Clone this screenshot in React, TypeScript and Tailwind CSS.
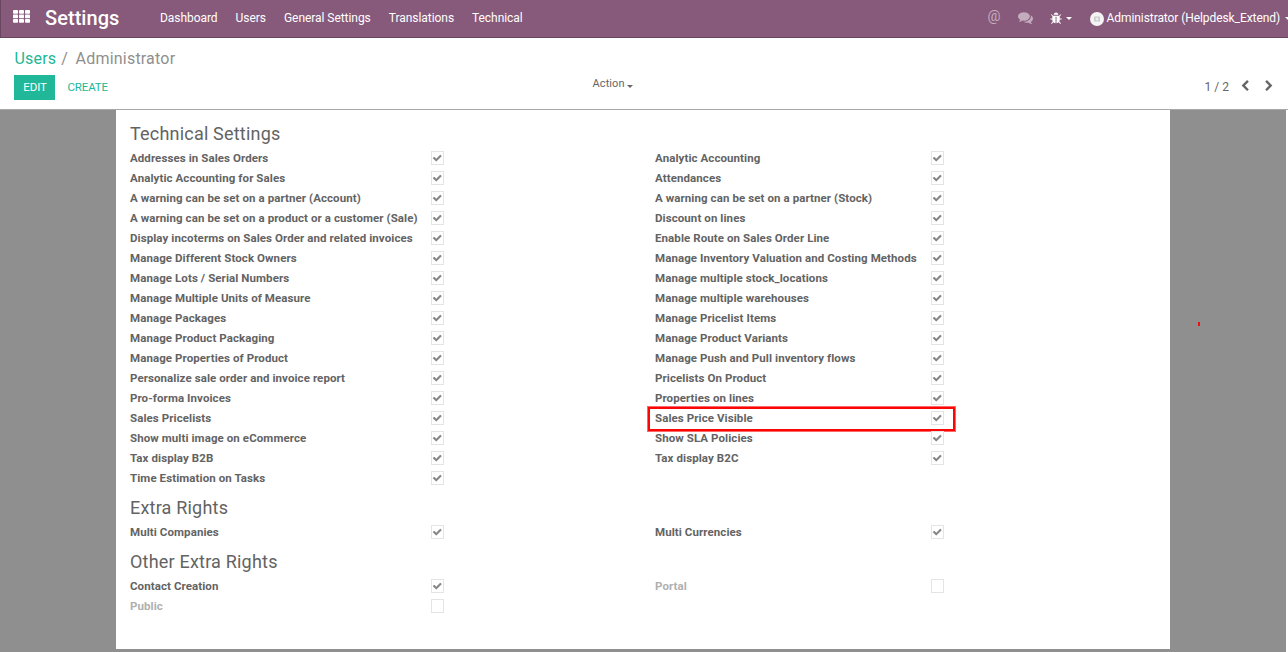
import React from "react";

type Item = [label: string, checked: boolean, highlighted?: boolean];

const on = (label: string): Item => [label, true];

const technicalLeft: Item[] = [
  "Addresses in Sales Orders",
  "Analytic Accounting for Sales",
  "A warning can be set on a partner (Account)",
  "A warning can be set on a product or a customer (Sale)",
  "Display incoterms on Sales Order and related invoices",
  "Manage Different Stock Owners",
  "Manage Lots / Serial Numbers",
  "Manage Multiple Units of Measure",
  "Manage Packages",
  "Manage Product Packaging",
  "Manage Properties of Product",
  "Personalize sale order and invoice report",
  "Pro-forma Invoices",
  "Sales Pricelists",
  "Show multi image on eCommerce",
  "Tax display B2B",
  "Time Estimation on Tasks",
].map(on);

const technicalRight: Item[] = [
  ...[
    "Analytic Accounting",
    "Attendances",
    "A warning can be set on a partner (Stock)",
    "Discount on lines",
    "Enable Route on Sales Order Line",
    "Manage Inventory Valuation and Costing Methods",
    "Manage multiple stock_locations",
    "Manage multiple warehouses",
    "Manage Pricelist Items",
    "Manage Product Variants",
    "Manage Push and Pull inventory flows",
    "Pricelists On Product",
    "Properties on lines",
  ].map(on),
  ["Sales Price Visible", true, true],
  on("Show SLA Policies"),
  on("Tax display B2C"),
];

const paths = {
  check:
    "M1671 566q0 40-28 68l-724 724-136 136q-28 28-68 28t-68-28l-136-136-362-362q-28-28-28-68t28-68l136-136q28-28 68-28t68 28l294 295 656-657q28-28 68-28t68 28l136 136q28 28 28 68z",
  left: "M1427 301l-531 531 531 531q19 19 19 45t-19 45l-166 166q-19 19-45 19t-45-19l-742-742q-19-19-19-45t19-45l742-742q19-19 45-19t45 19l166 166q19 19 19 45t-19 45z",
  right:
    "M1363 877l-742 742q-19 19-45 19t-45-19l-166-166q-19-19-19-45t19-45l531-531-531-531q-19-19-19-45t19-45l166-166q19-19 45-19t45 19l742 742q19 19 19 45t-19 45z",
  bug: "M1632 960q0 26-19 45t-45 19h-224q0 171-67 290l208 209q19 19 19 45t-19 45q-18 19-45 19t-45-19l-198-197q-5 5-15 13t-42 28.5-65 36.5-82 29-97 13v-896h-128v896q-51 0-101.5-13.5t-87-33-66-39-43.5-32.5l-15-14-183 207q-20 21-48 21-24 0-43-16-19-18-20.500-44.500t15.500-46.500l202-227q-58-114-58-274h-224q-26 0-45-19t-19-45 19-45 45-19h224v-294l-173-173q-19-19-19-45t19-45 45-19 45 19l173 173h844l173-173q19-19 45-19t45 19 19 45-19 45l-173 173v294h224q26 0 45 19t19 45zm-480-576h-640q0-133 93.500-226.500t226.500-93.500 226.500 93.500 93.500 226.500z",
  comments:
    "M1408 768q0 139-94 257t-256.500 186.500-353.500 68.500q-86 0-176-16-124 88-278 128-36 9-86 16h-3q-11 0-20.500-8t-11.500-21q-1-3-1-6.500t.5-6.500 2-6l2.500-5 3.500-5.500 4-5 4.500-5 4-4.500q5-6 23-25t26-29.500 22.500-29 25-38.500 20.500-44q-124-72-195-177t-71-224q0-139 94-257t256.500-186.500 353.500-68.500 353.500 68.500 256.500 186.500 94 257zm384 256q0 120-71 224.500t-195 176.500q10 24 20.500 44t25 38.500 22.500 29 26 29.500 23 25q1 1 4 4.500t4.500 5 4 5 3.500 5.500l2.500 5 2 6 .5 6.500-1 6.500q-3 14-13 22t-22 7q-50-7-86-16-154-40-278-128-90 16-176 16-271 0-472-132 58 4 88 4 161 0 309-45t264-129q125-92 192-212t67-254q0-77-23-152 129 71 204 178t75 230z",
};

function Icon({ name, className }: { name: keyof typeof paths; className: string }) {
  return (
    <svg viewBox="0 0 1792 1792" fill="currentColor" className={`shrink-0 ${className}`}>
      <path d={paths[name]} />
    </svg>
  );
}

function Caret({ className = "" }: { className?: string }) {
  return (
    <svg viewBox="0 0 6 3" fill="currentColor" className={`h-[3px] w-[6px] shrink-0 ${className}`}>
      <path d="M0 0h6L3 3z" />
    </svg>
  );
}

function AppsIcon() {
  return (
    <svg viewBox="0 0 17 13" fill="currentColor" className="mb-[3px] h-[13px] w-[17px] shrink-0">
      {[0, 4.5, 9].map((y) =>
        [0, 6, 12].map((x) => <rect key={`${x}-${y}`} x={x} y={y} width="5" height="3.8" rx="0.8" />)
      )}
    </svg>
  );
}

function Column({ items, labelWidth }: { items: Item[]; labelWidth: string }) {
  return (
    <div>
      {items.map(([label, checked, highlighted]) => (
        <div key={label} className="relative flex h-5 items-center">
          <span
            className={`shrink-0 whitespace-nowrap text-[11.5px] font-bold leading-[18px] tracking-[0.085px] ${labelWidth} ${checked ? "text-[#636363]" : "text-[#b0b0b0]"}`}
          >
            {label}
          </span>
          <span className="flex h-[14px] w-[13px] items-center justify-center border border-[#e4e4e4] text-[#868686]">
            {checked && <Icon name="check" className="mb-px h-[10px] w-[10.5px]" />}
          </span>
          {highlighted && (
            <span className="absolute -left-[7px] -top-[1px] h-[24px] w-[307px] border-2 border-[#fb0505] outline outline-[#f66]" />
          )}
        </div>
      ))}
    </div>
  );
}

function Section({ title, left, right }: { title: string; left: Item[]; right: Item[] }) {
  return (
    <section className="mb-[7px]">
      <h2 className="flex h-[27px] items-center whitespace-nowrap pb-[2px] text-[18px] tracking-[0.2px] text-[#636363]">
        {title}
      </h2>
      <div className="grid grid-cols-[525px_1fr]">
        <Column items={left} labelWidth="w-[301px]" />
        <Column items={right} labelWidth="w-[276px]" />
      </div>
    </section>
  );
}

export default function App() {
  return (
    <div className="flex h-[652px] w-[1288px] flex-col overflow-hidden bg-white font-['Roboto',sans-serif] text-[12px] text-[#666]">
      <header className="flex h-[38px] shrink-0 items-center border-b border-l border-b-[#68465f] border-l-[#68465f] bg-[#875a7b] pb-px pl-[11.5px] text-white">
        <AppsIcon />
        <h1 className="ml-[15.5px] w-[115px] text-[20px] font-medium tracking-[0.05px]">Settings</h1>
        <nav className="flex gap-[18px] whitespace-nowrap tracking-[-0.05px]">
          <a>Dashboard</a>
          <a>Users</a>
          <a>General Settings</a>
          <a>Translations</a>
          <a>Technical</a>
        </nav>
        <div className="ml-auto flex items-center whitespace-nowrap">
          <span className="mb-[2px] w-[30px] text-[14.5px] leading-none text-[#c3acbd]">@</span>
          <Icon name="comments" className="mb-[2px] h-[15px] w-[15px] text-[#c3acbd]" />
          <Icon name="bug" className="ml-[17px] h-[13px] w-[13px]" />
          <Caret className="ml-[3px]" />
          <svg viewBox="0 0 14 14" className="ml-[18px] mt-[2px] h-[14px] w-[14px]">
            <circle cx="7" cy="7" r="7" fill="#f4f4f4" />
            <rect x="4" y="4.500" width="6" height="5" rx="0.5" fill="#ccc" />
            <circle cx="7" cy="7" r="1.500" fill="#eee" />
          </svg>
          <span className="ml-[3px] tracking-[-0.08px]">Administrator (Helpdesk_Extend)</span>
          <Caret className="-mr-[3px] ml-[5px]" />
        </div>
      </header>
      <div className="h-[72px] shrink-0 border-b border-[#a8a8a8] pl-[14px] pr-[13px] pt-[11px]">
        <div className="flex h-[20px] items-center whitespace-pre text-[16px] tracking-[0.2px] text-[#8f8f8f]">
          <span className="ml-[0.5px] text-[#21b799]">Users</span>
          <span className="ml-[5px]">/</span>
          <span className="ml-[7.5px]">Administrator</span>
        </div>
        <div className="mt-[6px] grid grid-cols-[578px_1fr_auto]">
          <div className="flex text-[11.5px] tracking-[-0.15px]">
            <button className="h-[25px] w-[41px] bg-[#21b799] pl-px text-white">EDIT</button>
            <button className="ml-[12.5px] text-[#21b799]">CREATE</button>
          </div>
          <div className="flex h-[19px] items-center pl-[0.5px] text-[11px] tracking-[0.1px]">
            Action
            <Caret className="ml-[2px] mt-[3px]" />
          </div>
          <div className="flex h-[23px] items-center">
            <span>1 / 2</span>
            <Icon name="left" className="mb-[2px] ml-[9.5px] h-[12px] w-[12px]" />
            <Icon name="right" className="mb-[2px] ml-[12.5px] h-[12px] w-[12px]" />
          </div>
        </div>
      </div>
      <main className="relative mr-[2px] flex-1 bg-[#8f8f8f] pl-[116px]">
        <div className="h-[539px] w-[1054px] bg-white px-[14px] pt-[11px]">
          <Section title="Technical Settings" left={technicalLeft} right={technicalRight} />
          <Section title="Extra Rights" left={[on("Multi Companies")]} right={[on("Multi Currencies")]} />
          <Section
            title="Other Extra Rights"
            left={[on("Contact Creation"), ["Public", false]]}
            right={[["Portal", false]]}
          />
        </div>
        <span className="absolute left-[1198px] top-[212px] h-[4px] w-[2px] bg-[#e11]" />
      </main>
    </div>
  );
}
